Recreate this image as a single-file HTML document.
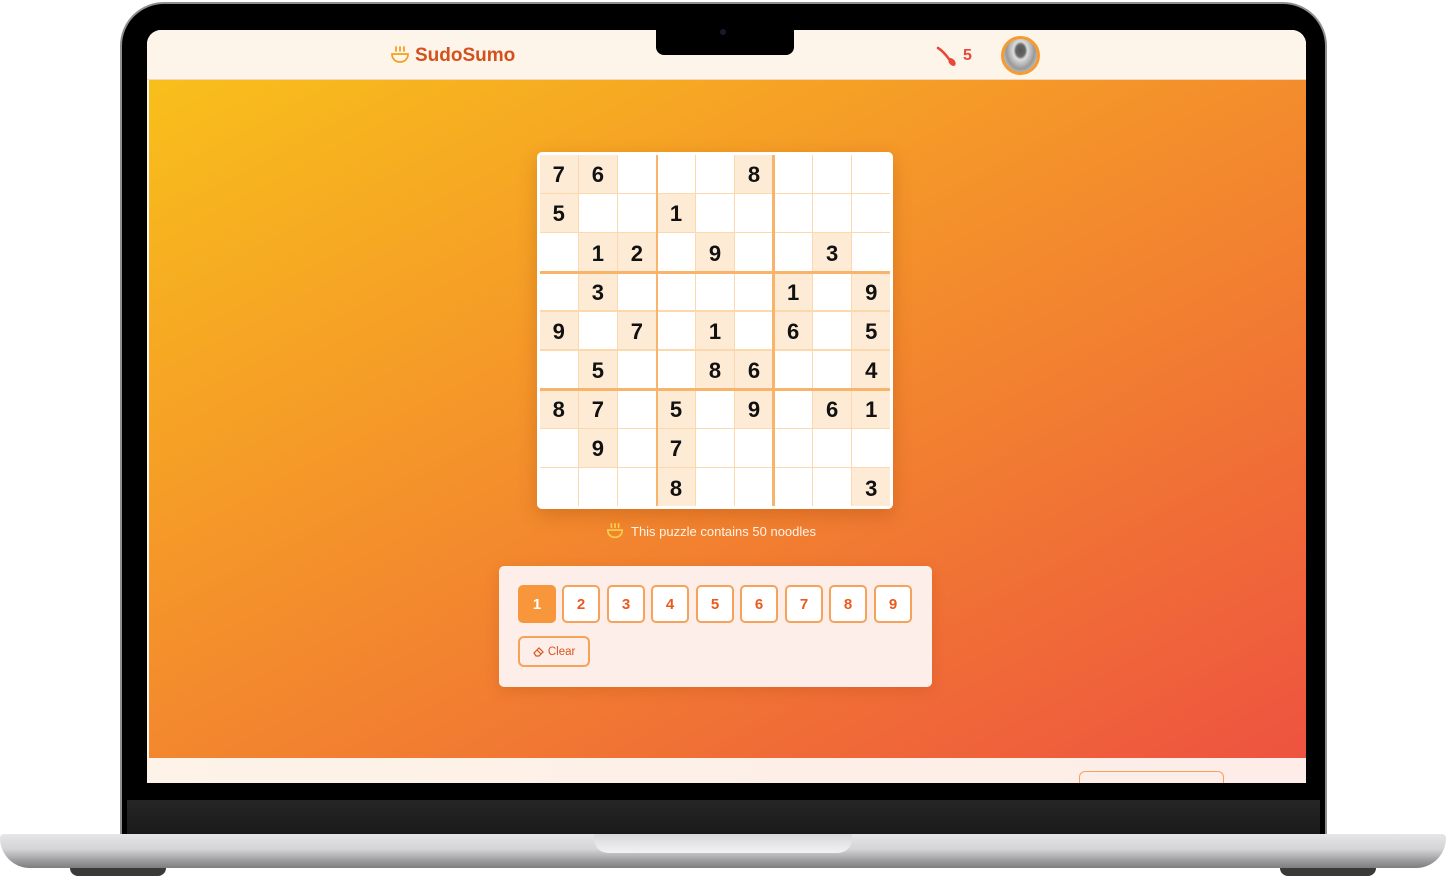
<!DOCTYPE html>
<html><head><meta charset="utf-8"><style>
*{margin:0;padding:0;box-sizing:border-box}
body{width:1446px;height:876px;background:#fff;position:relative;overflow:hidden;font-family:"Liberation Sans",sans-serif}
.abs{position:absolute}
.body{left:120px;top:2px;width:1207px;height:840px;border-radius:44px 44px 0 0;background:#000;border:2px solid #8e8e92}
.screen{left:147px;top:30px;width:1159px;height:753px;border-radius:14px 14px 0 0;overflow:hidden;background:#fdf6ea}
.notch{left:656px;top:28px;width:138px;height:27px;background:#000;border-radius:0 0 8px 8px}
.hdr{left:0;top:0;width:1159px;height:50px;background:#fdf5e9;border-bottom:1px solid #f0d8b8}
.main{left:2px;top:50px;width:1157px;height:678px;background:linear-gradient(152deg,#f8bf1b 0%,#f59a28 35%,#f17a32 65%,#ee5340 100%)}
.foot{left:0;top:728px;width:1159px;height:30px;background:linear-gradient(90deg,#fdf3e8,#fdece8)}
.grid{left:537px;top:152px;width:356px;height:357px;background:#fff;border-radius:5px;box-shadow:0 6px 18px rgba(150,60,0,.3);padding:3px}
.g{position:relative;display:grid;grid-template-columns:repeat(9,1fr);grid-template-rows:repeat(9,1fr);width:350px;height:351px;background:#fcd8ad;gap:1.5px}
.c{background:#fff;font:bold 22px "Liberation Sans",sans-serif;color:#111;display:flex;align-items:center;justify-content:center;padding-top:3px}
.f{background:#fdebd5}
.vl{position:absolute;top:0;width:2.5px;height:100%;background:#f9b46c}
.hl{position:absolute;left:0;height:2.5px;width:100%;background:#f9b46c}
.pad{left:499px;top:566px;width:433px;height:121px;background:#fdeeea;border-radius:5px;box-shadow:0 4px 14px rgba(150,60,0,.2)}
.nb{position:absolute;top:19px;width:38px;height:38px;border:2px solid #f7a25a;border-radius:5px;background:#fff;color:#ea5a1e;font:bold 15px "Liberation Sans",sans-serif;display:flex;align-items:center;justify-content:center}
</style></head><body>
<div class="abs body"></div>
<div class="abs" style="left:127px;top:800px;width:1193px;height:34px;background:linear-gradient(#262626,#1a1a1a)"></div>
<div class="abs screen">
 <div class="abs hdr"></div>
 <svg class="abs" style="left:243px;top:15px" width="20" height="20" viewBox="0 0 20 20" fill="none" stroke="#f3a11f" stroke-width="1.8" stroke-linecap="round"><path d="M6 2v4M10 2v4M14 2v4"/><path d="M2 9h16c0 5-3.5 8-8 8s-8-3-8-8z"/></svg>
 <div class="abs" style="left:268px;top:15px;font:bold 19px 'Liberation Sans',sans-serif;color:#d4501c">SudoSumo</div>
 <svg class="abs" style="left:788px;top:15px" width="24" height="24" viewBox="0 0 24 24"><path d="M3 3 Q8 6 14 14" stroke="#e8473a" stroke-width="2.5" fill="none" stroke-linecap="round"/><ellipse cx="17" cy="17" rx="3" ry="4.5" transform="rotate(-40 17 17)" fill="#e8473a"/></svg>
 <div class="abs" style="left:816px;top:17px;font:bold 16px 'Liberation Sans',sans-serif;color:#e8473a">5</div>
 <div class="abs" style="left:854px;top:6px;width:39px;height:39px;border-radius:50%;border:3px solid #f79a30;background:radial-gradient(ellipse at 50% 35%,#555 0,#666 20%,#ddd 30%,#999 60%,#eee 100%)"></div>
 <div class="abs main"></div>
 <div class="abs foot"></div>
 <div class="abs" style="left:932px;top:741px;width:145px;height:20px;border:1.5px solid #f7a25a;border-radius:6px 6px 0 0"></div>
</div>
<div class="abs notch"></div>
<div class="abs" style="left:720px;top:29px;width:6px;height:6px;border-radius:50%;background:#1a1a2a"></div>
<div class="abs grid"><div class="g">
<div class="c f">7</div><div class="c f">6</div><div class="c"></div><div class="c"></div><div class="c"></div><div class="c f">8</div><div class="c"></div><div class="c"></div><div class="c"></div>
<div class="c f">5</div><div class="c"></div><div class="c"></div><div class="c f">1</div><div class="c"></div><div class="c"></div><div class="c"></div><div class="c"></div><div class="c"></div>
<div class="c"></div><div class="c f">1</div><div class="c f">2</div><div class="c"></div><div class="c f">9</div><div class="c"></div><div class="c"></div><div class="c f">3</div><div class="c"></div>
<div class="c"></div><div class="c f">3</div><div class="c"></div><div class="c"></div><div class="c"></div><div class="c"></div><div class="c f">1</div><div class="c"></div><div class="c f">9</div>
<div class="c f">9</div><div class="c"></div><div class="c f">7</div><div class="c"></div><div class="c f">1</div><div class="c"></div><div class="c f">6</div><div class="c"></div><div class="c f">5</div>
<div class="c"></div><div class="c f">5</div><div class="c"></div><div class="c"></div><div class="c f">8</div><div class="c f">6</div><div class="c"></div><div class="c"></div><div class="c f">4</div>
<div class="c f">8</div><div class="c f">7</div><div class="c"></div><div class="c f">5</div><div class="c"></div><div class="c f">9</div><div class="c"></div><div class="c f">6</div><div class="c f">1</div>
<div class="c"></div><div class="c f">9</div><div class="c"></div><div class="c f">7</div><div class="c"></div><div class="c"></div><div class="c"></div><div class="c"></div><div class="c"></div>
<div class="c"></div><div class="c"></div><div class="c"></div><div class="c f">8</div><div class="c"></div><div class="c"></div><div class="c"></div><div class="c"></div><div class="c f">3</div>
<div class="vl" style="left:115.5px"></div><div class="vl" style="left:232px"></div>
<div class="hl" style="top:116px"></div><div class="hl" style="top:233px"></div>
</div></div>
<svg class="abs" style="left:606px;top:522px" width="18" height="18" viewBox="0 0 20 20" fill="none" stroke="#f8d24a" stroke-width="1.8" stroke-linecap="round"><path d="M6 2v4M10 2v4M14 2v4"/><path d="M2 9h16c0 5-3.5 8-8 8s-8-3-8-8z"/></svg>
<div class="abs" style="left:631px;top:524px;font-size:13px;color:#fff3e6">This puzzle contains 50 noodles</div>
<div class="abs pad">
 <div class="nb" style="left:19px;background:#f7963a;border-color:#f7963a;color:#fff">1</div>
 <div class="nb" style="left:63px">2</div><div class="nb" style="left:108px">3</div><div class="nb" style="left:152px">4</div><div class="nb" style="left:197px">5</div><div class="nb" style="left:241px">6</div><div class="nb" style="left:286px">7</div><div class="nb" style="left:330px">8</div><div class="nb" style="left:375px">9</div>
 <div style="position:absolute;left:19px;top:70px;width:72px;height:31px;border:2px solid #f7a25a;border-radius:6px;color:#d9531c;font-size:11.5px;display:flex;align-items:center;justify-content:center"><svg width="12" height="12" viewBox="0 0 12 12" fill="none" stroke="#d9531c" stroke-width="1.2"><path d="M1 7l5-5 4 4-4 4H3z M4 4l4 4"/></svg>&nbsp;Clear</div>
</div>
<div class="abs" style="left:0;top:834px;width:1446px;height:34px;border-radius:4px 4px 30px 30px;background:linear-gradient(#e6e6e8,#d4d4d6 45%,#9a9a9c 80%,#7e7e80)"></div>
<div class="abs" style="left:594px;top:834px;width:258px;height:19px;border-radius:0 0 14px 14px;background:linear-gradient(#d8d8da,#f2f2f3)"></div>
<div class="abs" style="left:70px;top:868px;width:96px;height:8px;border-radius:0 0 10px 10px;background:#3a3a38"></div>
<div class="abs" style="left:1280px;top:868px;width:96px;height:8px;border-radius:0 0 10px 10px;background:#3a3a38"></div>
</body></html>
